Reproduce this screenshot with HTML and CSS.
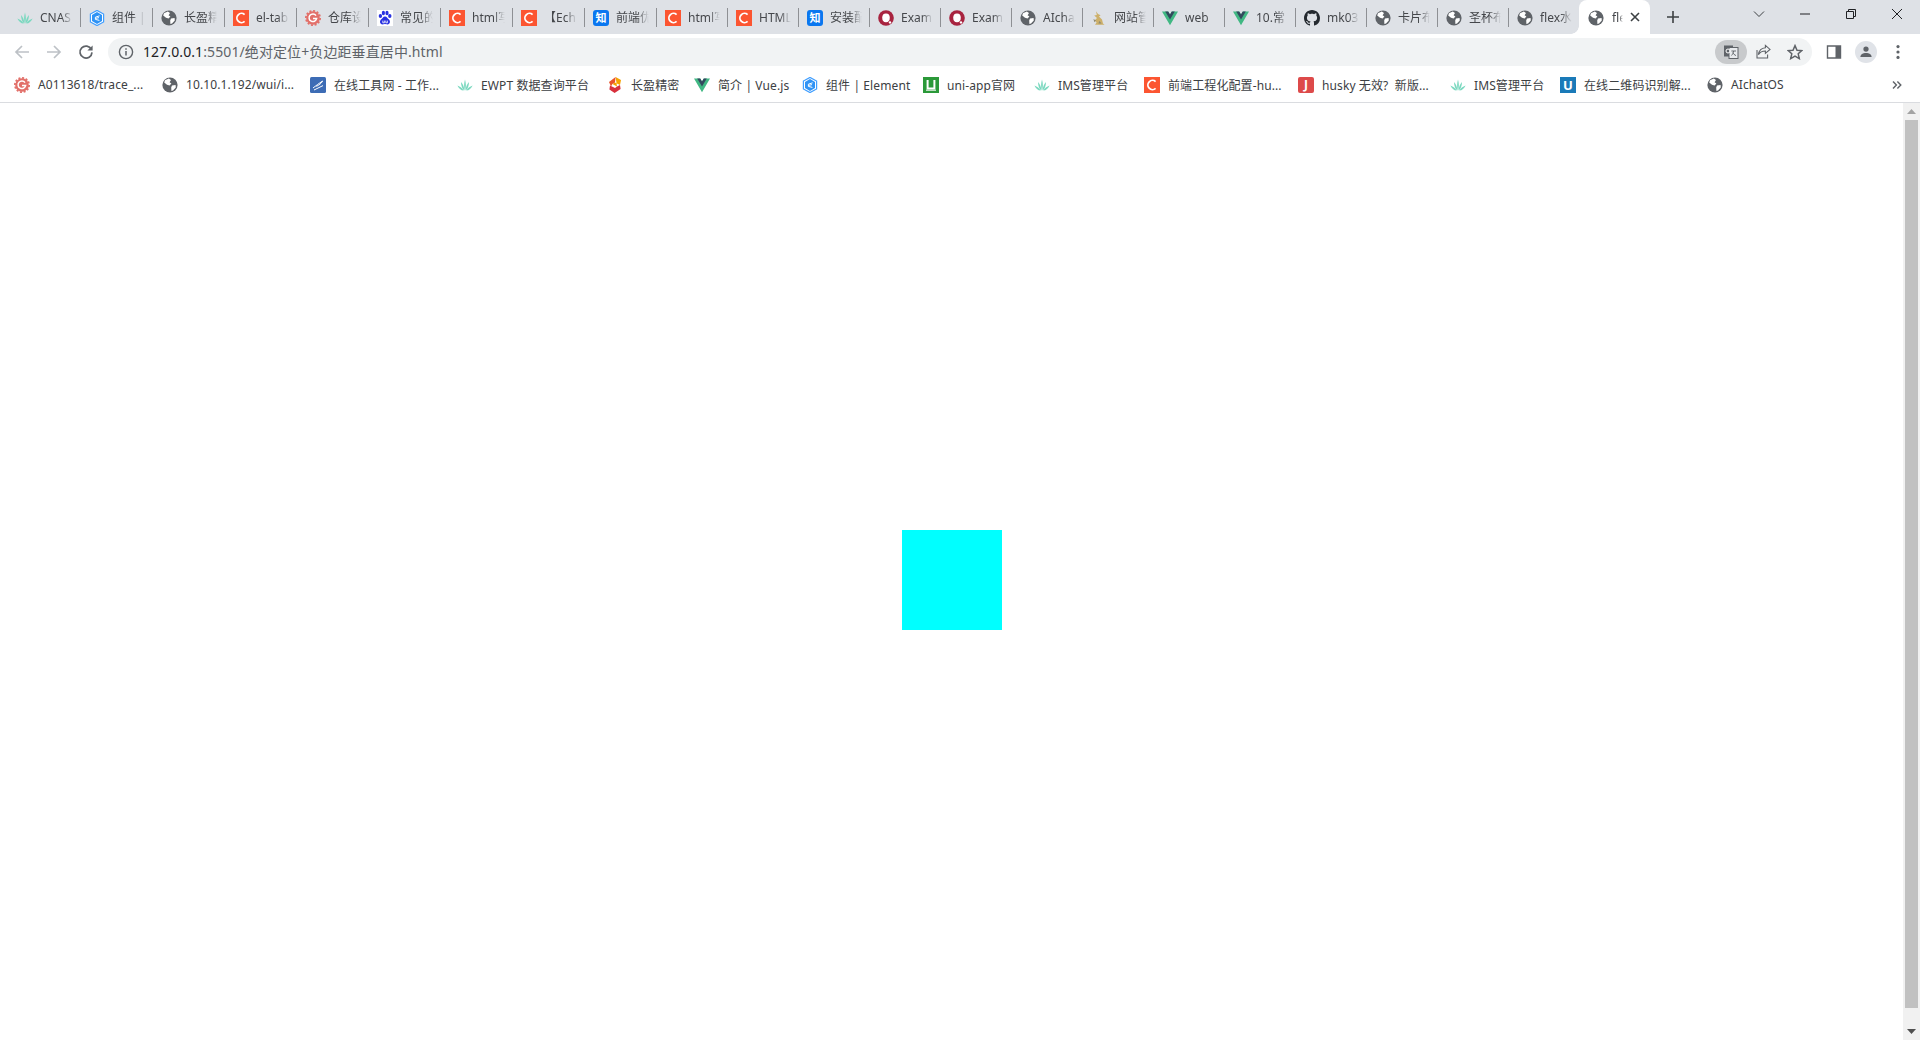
FILE: index.html
```html
<!DOCTYPE html>
<html lang="zh-CN">
<head>
    <meta charset="UTF-8">
    <meta name="viewport" content="width=device-width, initial-scale=1.0">
    <title>flex</title>
    <link rel="stylesheet" href="styles.css">
</head>
<body>
    <!-- favicons, reused by the tabs and the bookmarks -->
    <svg class="defs" aria-hidden="true">
        <symbol id="globe" viewBox="0 0 16 16">
            <circle cx="8" cy="8" r="7.6" fill="#5f6368"/>
            <path d="M3 3.2 6.8 1.6 9 3 7.6 5.2 9.4 6.6 7.6 8.6 5 7.8 2.2 5.6zM10 8.4 13.6 8 13.8 10.4 11 13.4 9.4 14 9.2 10.6z" fill="#fff"/>
        </symbol>
        <symbol id="agave" viewBox="0 0 16 16">
            <path d="M8 13.4C6.6 9.6 7 6.4 8 2.6 9 6.4 9.4 9.6 8 13.4ZM7.4 13.4C5 11.6 4.2 9 4 5 6 7.4 7.2 10 7.4 13.4ZM8.6 13.4C8.8 10 10 7.4 12 5 11.8 9 11 11.6 8.6 13.4ZM6.8 13.6C3.8 13.2 1.8 11.4 .4 8.4 3.2 9.6 5.4 11 6.8 13.6ZM9.2 13.6C10.6 11 12.8 9.6 15.6 8.4 14.2 11.4 12.2 13.2 9.2 13.6Z" fill="#7ad8bf"/>
        </symbol>
        <symbol id="element" viewBox="0 0 16 16">
            <path d="M8 .4 14.6 4V12L8 15.6 1.4 12V4Z" fill="#fff" stroke="#409eff" stroke-width="1.2"/>
            <path d="M8 2 13 4.9V11.1L8 14 3 11.1V4.9Z" fill="#2f93f5"/>
            <path d="M10.6 5.8 6.4 7.2V9.4L10.4 10.4M6.6 8.4 10 7.6" fill="none" stroke="#fff" stroke-width="1"/>
        </symbol>
        <symbol id="csdn" viewBox="0 0 16 16">
            <rect width="16" height="16" fill="#fc5531"/>
            <path d="M11.6 4.6A4.6 4.6 0 1 0 11.6 11.4" fill="none" stroke="#fff" stroke-width="1.8"/>
        </symbol>
        <symbol id="gitee" viewBox="0 0 16 16">
            <circle cx="8" cy="8" r="6.8" fill="#e2706a"/>
            <circle cx="8" cy="8" r="7.1" fill="none" stroke="#e2706a" stroke-width="1.8" stroke-dasharray="2 1.7"/>
            <path d="M11 5.6A3.8 3.8 0 1 0 11.6 8.6H8" fill="none" stroke="#fff" stroke-width="1.5"/>
        </symbol>
        <symbol id="baidu" viewBox="0 0 16 16">
            <rect width="16" height="16" fill="#fff"/>
            <g fill="#2932e1">
                <ellipse cx="3.4" cy="6" rx="1.7" ry="2.1"/>
                <ellipse cx="6.4" cy="3" rx="1.6" ry="2.2"/>
                <ellipse cx="10" cy="3" rx="1.6" ry="2.2"/>
                <ellipse cx="12.8" cy="6" rx="1.7" ry="2.1"/>
                <path d="M8 6.4C10 6.4 10.6 8.4 12 9.6 13.8 11.2 13 14.6 10.4 14.4 9 14.3 8.6 14 8 14 7.4 14 6.8 14.4 5.4 14.4 3 14.4 2.2 11.2 4 9.6 5.4 8.4 6 6.4 8 6.4Z"/>
            </g>
            <path d="M5.8 10.6V12.8H7.4V10.6M8.8 10.6V12.8H10.4V10.6" fill="none" stroke="#fff" stroke-width=".8"/>
        </symbol>
        <symbol id="opera" viewBox="0 0 16 16">
            <circle cx="8" cy="8" r="7.8" fill="#a8233f"/>
            <ellipse cx="8" cy="7.8" rx="3.8" ry="4.4" fill="#fff"/>
            <circle cx="12" cy="12.4" r="1.2" fill="#fff"/>
        </symbol>
        <symbol id="rabbit" viewBox="0 0 16 16">
            <path d="M5 1.2 7 4 9.6 5.2 8 6.6 11 9.4 12 13.4 13.6 14.8H4L5.6 12.6 3.6 10.4 6 8 3.2 5.4 5.8 5Z" fill="#cdb06a"/>
            <path d="M2.4 9 5 10.4 3.4 12.2ZM8.4 11 10.6 13.4 7.4 13.6Z" fill="#8f8a72"/>
        </symbol>
        <symbol id="vue" viewBox="0 0 16 16">
            <path d="M0 1.4H6.2L8 4.4 9.8 1.4H16L8 15.2Z" fill="#41b883"/>
            <path d="M3.2 1.4H6.2L8 4.4 9.8 1.4H12.8L8 9.6Z" fill="#34495e"/>
        </symbol>
        <symbol id="github" viewBox="0 0 16 16">
            <path d="M8 0C3.58 0 0 3.58 0 8c0 3.54 2.29 6.53 5.47 7.59.4.07.55-.17.55-.38 0-.19-.01-.82-.01-1.49-2.01.37-2.53-.49-2.69-.94-.09-.23-.48-.94-.82-1.13-.28-.15-.68-.52-.01-.53.63-.01 1.08.58 1.23.82.72 1.21 1.87.87 2.33.66.07-.52.28-.87.51-1.07-1.78-.2-3.64-.89-3.64-3.95 0-.87.31-1.59.82-2.15-.08-.2-.36-1.02.08-2.12 0 0 .67-.21 2.2.82.64-.18 1.32-.27 2-.27.68 0 1.36.09 2 .27 1.53-1.04 2.2-.82 2.2-.82.44 1.1.16 1.92.08 2.12.51.56.82 1.27.82 2.15 0 3.07-1.87 3.75-3.65 3.95.29.25.54.73.54 1.48 0 1.07-.01 1.93-.01 2.2 0 .21.15.46.55.38A8.013 8.013 0 0016 8c0-4.42-3.58-8-8-8z" fill="#24292f"/>
        </symbol>
        <symbol id="tools" viewBox="0 0 16 16">
            <rect width="16" height="16" rx="1.5" fill="#3d6cb5"/>
            <path d="M3 11C6 9 9 6 12.6 4 11 7 9 8 6.4 9.4M4 13C7 11.6 10 10 13 8.6" fill="none" stroke="#fff" stroke-width="1"/>
        </symbol>
        <symbol id="sharp" viewBox="0 0 16 16">
            <path d="M8.6 0 14 3 13 8 8 5.6 5.4 7 10 9.4Z" fill="#f5a300"/>
            <path d="M2 5 8.6 0 8 5.6 5.4 7 4 9.6Z" fill="#e8542a"/>
            <path d="M10 9.4 13 8 13.6 12 7.6 16 2.4 12.6 3 8.4 8 11Z" fill="#d8303c"/>
        </symbol>
        <symbol id="uniapp" viewBox="0 0 16 16">
            <rect width="16" height="16" fill="#2b9939"/>
            <path d="M4.6 3V11.4H11.4V3" fill="none" stroke="#fff" stroke-width="2"/>
            <path d="M3 13.2H13" stroke="#fff" stroke-width="1"/>
        </symbol>
    </svg>

    <div class="tabstrip">
        <div class="tabs">
            <div class="tab"><svg class="favicon"><use href="#agave"/></svg><span class="tab-title">CNAS</span></div>
            <div class="tab"><svg class="favicon"><use href="#element"/></svg><span class="tab-title">组件 |</span></div>
            <div class="tab"><svg class="favicon"><use href="#globe"/></svg><span class="tab-title">长盈精</span></div>
            <div class="tab"><svg class="favicon"><use href="#csdn"/></svg><span class="tab-title">el-tab</span></div>
            <div class="tab"><svg class="favicon"><use href="#gitee"/></svg><span class="tab-title">仓库设</span></div>
            <div class="tab"><svg class="favicon"><use href="#baidu"/></svg><span class="tab-title">常见的</span></div>
            <div class="tab"><svg class="favicon"><use href="#csdn"/></svg><span class="tab-title">html写</span></div>
            <div class="tab"><svg class="favicon"><use href="#csdn"/></svg><span class="tab-title">【Ech</span></div>
            <div class="tab"><span class="favicon letter zhihu">知</span><span class="tab-title">前端优</span></div>
            <div class="tab"><svg class="favicon"><use href="#csdn"/></svg><span class="tab-title">html写</span></div>
            <div class="tab"><svg class="favicon"><use href="#csdn"/></svg><span class="tab-title">HTML</span></div>
            <div class="tab"><span class="favicon letter zhihu">知</span><span class="tab-title">安装配</span></div>
            <div class="tab"><svg class="favicon"><use href="#opera"/></svg><span class="tab-title">Exam</span></div>
            <div class="tab"><svg class="favicon"><use href="#opera"/></svg><span class="tab-title">Exam</span></div>
            <div class="tab"><svg class="favicon"><use href="#globe"/></svg><span class="tab-title">AIcha</span></div>
            <div class="tab"><svg class="favicon"><use href="#rabbit"/></svg><span class="tab-title">网站管</span></div>
            <div class="tab"><svg class="favicon"><use href="#vue"/></svg><span class="tab-title">web</span></div>
            <div class="tab"><svg class="favicon"><use href="#vue"/></svg><span class="tab-title">10.常</span></div>
            <div class="tab"><svg class="favicon"><use href="#github"/></svg><span class="tab-title">mk03</span></div>
            <div class="tab"><svg class="favicon"><use href="#globe"/></svg><span class="tab-title">卡片布</span></div>
            <div class="tab"><svg class="favicon"><use href="#globe"/></svg><span class="tab-title">圣杯布</span></div>
            <div class="tab before-active"><svg class="favicon"><use href="#globe"/></svg><span class="tab-title">flex水</span></div>
            <div class="tab active">
                <svg class="favicon"><use href="#globe"/></svg><span class="tab-title">fle</span>
                <svg class="tab-close" viewBox="0 0 12 12"><path d="M2 2 10 10M10 2 2 10" stroke="#3c4043" stroke-width="1.6"/></svg>
            </div>
        </div>
        <div class="new-tab">
            <svg viewBox="0 0 14 14"><path d="M7 1V13M1 7H13" stroke="#3c4043" stroke-width="1.6"/></svg>
        </div>
        <div class="window-btn first">
            <svg viewBox="0 0 12 12"><path d="M1 3.5 6 8.5 11 3.5" fill="none" stroke="#3c4043"/></svg>
        </div>
        <div class="window-btn">
            <svg viewBox="0 0 12 12"><path d="M1 6H11" stroke="#202124"/></svg>
        </div>
        <div class="window-btn">
            <svg viewBox="0 0 12 12"><path d="M1.5 3.5H8.5V10.5H1.5ZM3.5 3.5V1.5H10.5V8.5H8.5" fill="none" stroke="#202124"/></svg>
        </div>
        <div class="window-btn">
            <svg viewBox="0 0 12 12"><path d="M1 1 11 11M11 1 1 11" stroke="#202124"/></svg>
        </div>
    </div>

    <div class="toolbar">
        <div class="tool-btn">
            <svg viewBox="0 0 16 16"><path d="M15 8H2M8 2 2 8 8 14" fill="none" stroke="#bdc1c6" stroke-width="1.7"/></svg>
        </div>
        <div class="tool-btn">
            <svg viewBox="0 0 16 16"><path d="M1 8H14M8 2 14 8 8 14" fill="none" stroke="#bdc1c6" stroke-width="1.7"/></svg>
        </div>
        <div class="tool-btn">
            <svg viewBox="0 0 16 16"><path d="M13.4 5.4A6 6 0 1 0 14 8.4" fill="none" stroke="#5f6368" stroke-width="1.7"/><path d="M14.6 1.4V6.6H9.4Z" fill="#5f6368"/></svg>
        </div>
        <div class="omnibox">
            <svg class="info-icon" viewBox="0 0 16 16">
                <circle cx="8" cy="8" r="6.6" fill="none" stroke="#5f6368" stroke-width="1.4"/>
                <path d="M8 7V11.6M8 4.2V5.8" stroke="#5f6368" stroke-width="1.5"/>
            </svg>
            <span class="url"><span class="url-host">127.0.0.1</span>:5501/绝对定位+负边距垂直居中.html</span>
            <div class="translate-btn">
                <svg viewBox="0 0 16 16">
                    <rect x="1" y="1.5" width="9" height="11" fill="#5f6368"/>
                    <rect x="6" y="3.5" width="9" height="11" fill="#e8eaed" stroke="#5f6368"/>
                    <circle cx="5" cy="7" r="2" fill="none" stroke="#fff"/>
                    <path d="M8.4 7H13M10.6 7C10.6 9 9.6 10.6 8.4 11.4M9.6 8.6C10.4 10 11.4 11 13 11.6" fill="none" stroke="#5f6368" stroke-width=".9"/>
                </svg>
            </div>
            <div class="omni-btn">
                <svg viewBox="0 0 16 16"><path d="M10.4 1.4 15 5.4 10.4 9.4V7C7 7 5 8 3.4 10.6 4 7 6 4.2 10.4 3.8ZM2 6V14H12.6V10.4" fill="none" stroke="#5f6368" stroke-width="1.1"/></svg>
            </div>
            <div class="omni-btn">
                <svg viewBox="0 0 16 16"><path d="M8 1.6 10 6.2 14.8 6.6 11.2 9.8 12.3 14.6 8 12.1 3.7 14.6 4.8 9.8 1.2 6.6 6 6.2Z" fill="none" stroke="#5f6368" stroke-width="1.5"/></svg>
            </div>
        </div>
        <div class="tool-btn">
            <svg viewBox="0 0 16 16"><path d="M1.5 2H14.5V14H1.5Z" fill="#fff" stroke="#5f6368" stroke-width="1.4"/><rect x="9.5" y="2" width="5" height="12" fill="#5f6368"/></svg>
        </div>
        <div class="tool-btn">
            <div class="avatar">
                <svg viewBox="0 0 16 16"><circle cx="8" cy="4.6" r="3" fill="#5f6368"/><path d="M1.6 13.6C1.6 10.4 4.6 9 8 9S14.4 10.4 14.4 13.6Z" fill="#5f6368"/></svg>
            </div>
        </div>
        <div class="tool-btn">
            <svg viewBox="0 0 16 16"><g fill="#5f6368"><circle cx="8" cy="2.6" r="1.6"/><circle cx="8" cy="8" r="1.6"/><circle cx="8" cy="13.4" r="1.6"/></g></svg>
        </div>
    </div>

    <div class="bookmarks">
        <div class="bookmark"><svg class="favicon"><use href="#gitee"/></svg>A0113618/trace_...</div>
        <div class="bookmark"><svg class="favicon"><use href="#globe"/></svg>10.10.1.192/wui/i...</div>
        <div class="bookmark"><svg class="favicon"><use href="#tools"/></svg>在线工具网 - 工作...</div>
        <div class="bookmark"><svg class="favicon"><use href="#agave"/></svg>EWPT 数据查询平台</div>
        <div class="bookmark"><svg class="favicon"><use href="#sharp"/></svg>长盈精密</div>
        <div class="bookmark"><svg class="favicon"><use href="#vue"/></svg>简介 | Vue.js</div>
        <div class="bookmark"><svg class="favicon"><use href="#element"/></svg>组件 | Element</div>
        <div class="bookmark"><svg class="favicon"><use href="#uniapp"/></svg>uni-app官网</div>
        <div class="bookmark"><svg class="favicon"><use href="#agave"/></svg>IMS管理平台</div>
        <div class="bookmark"><svg class="favicon"><use href="#csdn"/></svg>前端工程化配置-hu...</div>
        <div class="bookmark"><span class="favicon letter husky">J</span>husky 无效?&nbsp;&nbsp;新版...</div>
        <div class="bookmark"><svg class="favicon"><use href="#agave"/></svg>IMS管理平台</div>
        <div class="bookmark"><span class="favicon letter qr">U</span>在线二维码识别解...</div>
        <div class="bookmark"><svg class="favicon"><use href="#globe"/></svg>AIchatOS</div>
        <div class="more-bookmarks">
            <svg viewBox="0 0 10 10"><path d="M1 1.5 4.4 5 1 8.5M5.4 1.5 8.8 5 5.4 8.5" fill="none" stroke="#5f6368" stroke-width="1.4"/></svg>
        </div>
    </div>

    <div class="viewport">
        <div class="page">
            <div class="box"></div>
        </div>
        <div class="scrollbar">
            <div class="arrow-btn"><svg viewBox="0 0 9 5"><path d="M4.5 0 9 5H0Z" fill="#a3a3a3"/></svg></div>
            <div class="thumb"></div>
            <div class="arrow-btn"><svg viewBox="0 0 9 5"><path d="M0 0H9L4.5 5Z" fill="#505050"/></svg></div>
        </div>
    </div>
</body>
</html>
```

FILE: styles.css
```css
* {
    box-sizing: border-box;
}

html, body {
    height: 100%;
}

body {
    margin: 0;
    overflow: hidden;
    display: flex;
    flex-direction: column;
    background: #fff;
    font-family: "Noto Sans", "Noto Sans CJK SC", sans-serif;
    font-size: 12px;
    color: #45474b;
}

svg {
    display: block;
}

.defs {
    width: 0;
    height: 0;
    position: absolute;
}

.favicon {
    width: 16px;
    height: 16px;
    flex: none;
}

/* favicons that are just a letter on a coloured square */
.letter {
    display: flex;
    align-items: center;
    justify-content: center;
    color: #fff;
    font-weight: 700;
    line-height: 16px;
}
.zhihu {
    border-radius: 3px;
    background: #0a77f0;
    font-size: 11px;
}
.husky {
    border-radius: 2px;
    background: #dd4a4a;
    font-size: 12px;
}
.qr {
    background: #1a7ab8;
    font-size: 13px;
}

/* tab strip */
.tabstrip {
    height: 34px;
    flex: none;
    display: flex;
    padding-left: 8px;
    background: #dee1e6;
}

.tabs {
    width: 1642px;
    display: grid;
    grid-template-columns: repeat(9, 72px) repeat(14, 71px);
}

.tab {
    position: relative;
    min-width: 0;
    display: flex;
    align-items: center;
    gap: 7px;
    padding: 2px 7px 0 9px;
}

.tab::after {
    content: "";
    position: absolute;
    right: -1px;
    top: 8px;
    width: 1px;
    height: 19px;
    background: #8e9094;
}

.tab.before-active::after,
.tab.active::after {
    display: none;
}

.tab-title {
    flex: 1;
    min-width: 0;
    overflow: hidden;
    white-space: nowrap;
    line-height: 18px;
    -webkit-mask-image: linear-gradient(to right, #000 65%, transparent 100%);
    mask-image: linear-gradient(to right, #000 65%, transparent 100%);
}

.tab.active {
    background: #fff;
    border-radius: 8px 8px 0 0;
    padding: 2px 9px 0 9px;
}

.tab.active .tab-title {
    margin-left: 1px;
}

/* flared bottom corners of the open tab */
.tab.active::before {
    content: "";
    position: absolute;
    left: -8px;
    bottom: 0;
    width: 8px;
    height: 8px;
    background: radial-gradient(circle at 0 0, transparent 7.5px, #fff 8px);
}

.tab.active .tab-close {
    width: 12px;
    height: 12px;
    flex: none;
    margin: -2px 0 0 -1px;
}

.new-tab {
    width: 28px;
    margin-left: 9px;
    display: flex;
    align-items: center;
    justify-content: center;
}
.new-tab svg {
    width: 14px;
    height: 14px;
}

.window-btn {
    width: 46px;
    height: 28px;
    display: flex;
    align-items: center;
    justify-content: center;
}
.window-btn svg {
    width: 12px;
    height: 12px;
}
.window-btn.first {
    margin-left: auto;
}

/* address bar row */
.toolbar {
    height: 38px;
    flex: none;
    display: flex;
    align-items: center;
    padding: 0 6px 2px;
    background: #fff;
}

.tool-btn {
    width: 32px;
    height: 28px;
    flex: none;
    display: flex;
    align-items: center;
    justify-content: center;
}
.tool-btn svg {
    width: 16px;
    height: 16px;
}

.omnibox {
    flex: 1;
    height: 28px;
    margin: 0 6px;
    padding: 0 1px 0 10px;
    display: flex;
    align-items: center;
    border-radius: 14px;
    background: #f1f3f4;
}

.info-icon {
    width: 16px;
    height: 16px;
    flex: none;
}

.url {
    margin-left: 9px;
    padding-bottom: 2px;
    font-size: 14px;
    letter-spacing: .1px;
    color: #5f6368;
    white-space: nowrap;
}
.url-host {
    color: #202124;
}

.translate-btn {
    width: 32px;
    height: 24px;
    margin-left: auto;
    display: flex;
    align-items: center;
    justify-content: center;
    border-radius: 12px;
    background: #c8cacc;
}
.translate-btn svg {
    width: 16px;
    height: 16px;
}

.omni-btn {
    width: 32px;
    height: 24px;
    display: flex;
    align-items: center;
    justify-content: center;
}
.omni-btn svg {
    width: 16px;
    height: 16px;
}

.avatar {
    width: 22px;
    height: 22px;
    display: flex;
    align-items: center;
    justify-content: center;
    border-radius: 50%;
    background: #e0e3e8;
}
.avatar svg {
    width: 14px;
    height: 14px;
}

/* bookmarks bar */
.bookmarks {
    height: 31px;
    flex: none;
    display: grid;
    grid-template-columns: 148px 148px 147px 150px 87px 108px 121px 111px 110px 154px 152px 110px 147px 185px 1fr;
    align-items: center;
    padding: 0 0 5px 14px;
    border-bottom: 1px solid #dadce0;
    background: #fff;
}

.bookmark {
    display: flex;
    align-items: center;
    gap: 8px;
    white-space: nowrap;
    letter-spacing: .1px;
    color: #3c4043;
}

.more-bookmarks svg {
    width: 10px;
    height: 10px;
}

/* page content */
.viewport {
    flex: 1;
    min-height: 0;
    display: flex;
}

.page {
    flex: 1;
    display: flex;
    justify-content: center;
    align-items: flex-start;
    padding: 427px 0 0 1px;
}

.box {
    width: 100px;
    height: 100px;
    background: #00ffff;
}

.scrollbar {
    width: 17px;
    flex: none;
    display: flex;
    flex-direction: column;
    background: #f1f1f1;
}

.arrow-btn {
    height: 17px;
    flex: none;
    display: flex;
    align-items: center;
    justify-content: center;
}
.arrow-btn svg {
    width: 9px;
    height: 5px;
}

.thumb {
    flex: 1;
    margin: 0 2px 15px;
    background: #c1c1c1;
}
```
